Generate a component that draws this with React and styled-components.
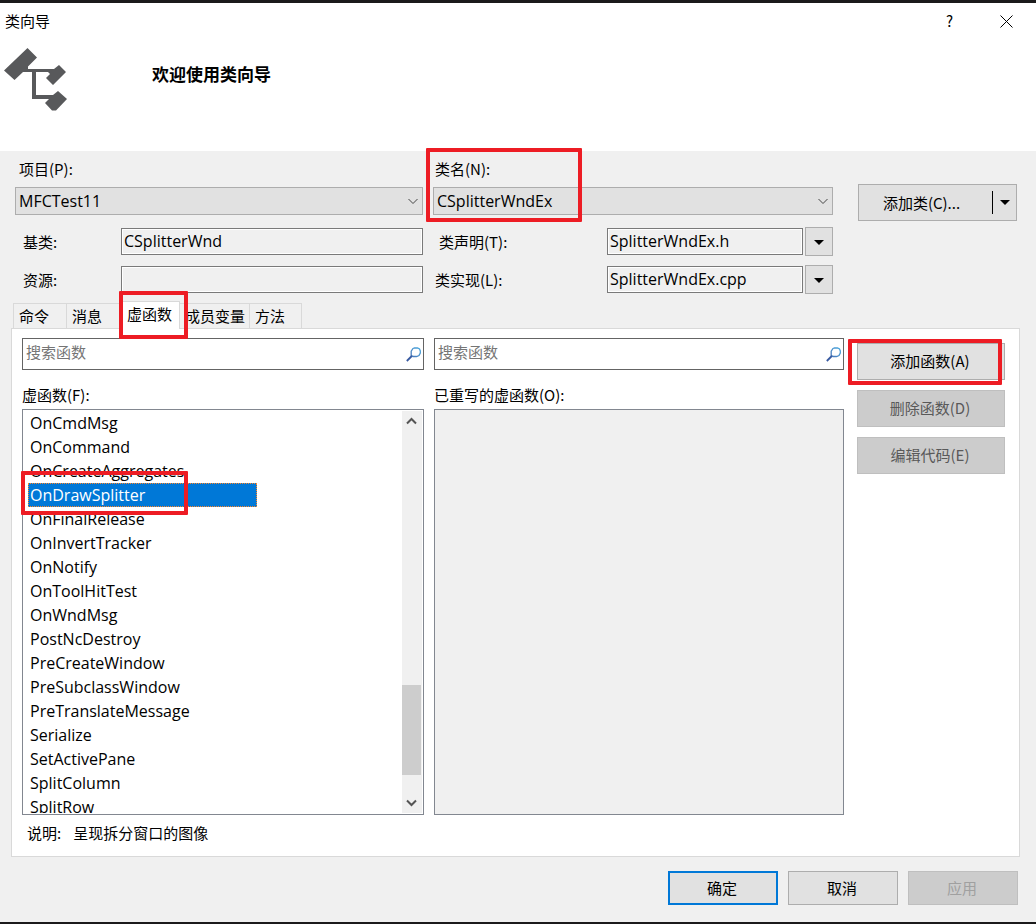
import React, { useState } from 'react';
import styled, { createGlobalStyle, css } from 'styled-components';

const uiFont = `'Noto Sans CJK SC', 'Noto Sans', sans-serif`;
const codeFont = `'Open Sans', 'Noto Sans CJK SC', sans-serif`;

const GlobalStyle = createGlobalStyle`
  * {
    box-sizing: border-box;
  }
  body {
    margin: 0;
    background: #f0f0f0;
    color: #000;
    font: 15px/20px ${uiFont};
  }
  button, input, select {
    margin: 0;
    color: inherit;
    font: inherit;
  }
`;

const Window = styled.div`
  min-height: 100vh;
  display: flex;
  flex-direction: column;
  border-top: 3px solid #1b1a1b;
  border-bottom: 2px solid #1b1a1b;
  background: #f0f0f0;
`;

const Header = styled.header`
  height: 148px;
  background: #fff;
`;

const TitleBar = styled.div`
  height: 36px;
  padding-left: 5px;
  display: flex;
  align-items: center;
  justify-content: space-between;
`;

const WindowButtons = styled.div`
  display: flex;
  height: 100%;
  padding-right: 1px;
`;

const WindowButton = styled.button`
  width: 57px;
  padding: 0;
  border: none;
  background: transparent;
  display: flex;
  align-items: center;
  justify-content: center;
`;

const Banner = styled.div`
  display: flex;
  align-items: flex-start;
  gap: 84px;
  padding: 8px 4px;
`;

const Heading = styled.h1`
  margin: 0;
  padding-top: 15px;
  font-size: 17px;
  line-height: 24px;
  font-weight: 700;
`;

const ClassSection = styled.section`
  display: grid;
  grid-template-columns: minmax(0, 408fr) minmax(0, 400fr) 174px;
  column-gap: 10px;
  padding: 8px 19px 0 15px;
`;

const Column = styled.div`
  position: relative;
  display: flex;
  flex-direction: column;
`;

const Label = styled.label`
  display: block;
  padding-left: ${({ $indent }) => $indent || 0}px;
`;

const ComboBox = styled.div`
  position: relative;
  margin: 8px 0 12px;

  svg {
    position: absolute;
    top: 11px;
    right: 5px;
    pointer-events: none;
  }
`;

const Select = styled.select`
  appearance: none;
  display: block;
  width: 100%;
  height: 28px;
  padding: 0 24px 1px 3px;
  border: 1px solid #adadad;
  border-radius: 0;
  background: #e1e1e1;
  font-family: ${codeFont};
  font-size: 16px;
`;

const FieldRow = styled.div`
  height: 29px;
  display: flex;
  align-items: center;

  & + & {
    margin-top: 9px;
  }
`;

const FieldLabel = styled.label`
  flex: none;
  width: ${({ $width }) => $width}px;
  padding-left: ${({ $indent }) => $indent}px;
`;

const TextField = styled.input`
  flex: 1;
  min-width: 0;
  height: 27px;
  padding: 0 2px 2px;
  border: 1px solid #7a7a7a;
  box-shadow: inset 0 0 0 1px #fff;
  background: #f0f0f0;
  font-family: ${codeFont};
  font-size: 16px;
`;

const Button = styled.button`
  height: 37px;
  padding: 0 2px 2px 0;
  border: 1px solid #adadad;
  background: #e1e1e1;
  display: flex;
  align-items: center;
  justify-content: center;

  &:disabled {
    border-color: #bfbfbf;
    background: #ccc;
    color: #595959;
  }
`;

const ArrowButton = styled(Button)`
  width: 28px;
  height: 29px;
  margin-left: 2px;
  padding: 2px 0 0;
`;

const SplitButton = styled.div`
  height: 37px;
  margin: 25px 0 0 15px;
  display: flex;
  align-items: center;
  border: 1px solid #adadad;
  background: #e1e1e1;
`;

const SplitMain = styled(Button)`
  flex: 1;
  height: 35px;
  padding: 0 8px 0 0;
  border: none;
`;

const SplitArrow = styled(Button)`
  width: 24px;
  height: 23px;
  padding: 0;
  border: none;
  border-left: 1px solid #000;
`;

const Tabs = styled.div`
  display: flex;
  align-items: flex-end;
  height: 28px;
  margin: 7px 0 -1px;
  padding-left: 13px;
`;

const Tab = styled.button`
  position: relative;
  width: ${({ $width }) => $width}px;
  height: 26px;
  padding: 0 0 0 5px;
  border: 1px solid #d9d9d9;
  border-left-width: 0;
  background: #f0f0f0;
  text-align: left;
  white-space: nowrap;

  &:first-child {
    border-left-width: 1px;
  }

  ${({ $active }) =>
    $active &&
    css`
      z-index: 1;
      height: 28px;
      padding: 0 0 4px 7px;
      border-bottom: none;
      background: #fff;
    `}
`;

const Panel = styled.section`
  flex: 1;
  margin: 0 16px 0 11px;
  padding: 9px 14px 12px 10px;
  border: 1px solid #d9d9d9;
  background: #fff;
`;

const PanelGrid = styled.div`
  display: grid;
  grid-template-columns: minmax(0, 402fr) minmax(0, 410fr) 151px;
  column-gap: 10px;
`;

const SearchBox = styled.div`
  height: 32px;
  margin-bottom: 15px;
  padding: 0 2px 0 3px;
  display: flex;
  align-items: center;
  border: 1px solid #646464;
`;

const SearchInput = styled.input`
  flex: 1;
  min-width: 0;
  height: 26px;
  padding: 0 0 5px;
  border: none;
  outline: none;
  background: transparent;

  &::placeholder {
    color: #757575;
    opacity: 1;
  }
`;

const ListFrame = styled.div`
  position: relative;
  height: 406px;
  margin-top: 4px;
  padding: 1px;
  display: flex;
  border: 1px solid #828790;
  background: ${({ $empty }) => ($empty ? '#f0f0f0' : '#fff')};
`;

const List = styled.ul`
  flex: 1;
  height: 402px;
  margin: 0;
  padding: 0 0 0 4px;
  overflow: hidden;
  list-style: none;
  font-family: ${codeFont};
  font-size: 16px;
`;

const ListItem = styled.li`
  width: 229px;
  height: 24px;
  padding-left: 2px;
  line-height: 24px;
  cursor: default;

  ${({ $selected }) =>
    $selected &&
    css`
      background: #0078d7;
      color: #fff;
      outline: 1px dotted #ff8728;
      outline-offset: -1px;
    `}
`;

const ScrollBar = styled.div`
  flex: none;
  width: 20px;
  display: flex;
  flex-direction: column;
  background: #f0f0f0;
`;

const ScrollButton = styled.button`
  height: 20px;
  padding: 0 1px 0 0;
  border: none;
  background: transparent;
  display: flex;
  align-items: center;
  justify-content: center;
`;

const Track = styled.div`
  flex: 1;
  display: flex;
  flex-direction: column;
  justify-content: flex-end;
  padding: 0 1px 18px 0;
`;

const Thumb = styled.div`
  height: 90px;
  background: #cdcdcd;
`;

const Actions = styled.div`
  position: relative;
  display: flex;
  flex-direction: column;
  gap: 10px;
  padding: 5px 0 0 3px;
`;

const Description = styled.p`
  display: flex;
  gap: 12px;
  margin: 8px 0 0;
  padding-left: 5px;
`;

const Footer = styled.footer`
  display: flex;
  justify-content: flex-end;
  gap: 10px;
  padding: 14px 18px 17px;
`;

const FooterButton = styled(Button)`
  width: 110px;
  height: 34px;
  padding: 0 2px 0 0;

  ${({ $primary }) => $primary && css`border: 2px solid #0078d7;`}

  &:disabled {
    color: #a0a0a0;
  }
`;

// Red frame drawn over the part the reader should look at
const Highlight = styled.span`
  position: absolute;
  z-index: 2;
  top: ${({ $top }) => $top}px;
  left: ${({ $left }) => $left}px;
  width: ${({ $width }) => $width}px;
  height: ${({ $height }) => $height}px;
  border: 4px solid #ed1c24;
  border-radius: 1px;
  pointer-events: none;
`;

const ClassIcon = () => (
  <svg width="64" height="64" viewBox="0 0 64 64" fill="#58595b" aria-hidden="true">
    <path d="M23.5 1 33 10.5 24 19.5V22H50L55 18 62 25 49 38 42 31 46 27 44 25H32V48H49L54 44 63 52 52 63.5H48L41 56 45 52H28V25H19L10.5 33 0 23.5Z" />
  </svg>
);

const CloseIcon = () => (
  <svg width="13" height="13" viewBox="0 0 13 13" stroke="#000" fill="none">
    <path d="M.5.5l12 12M12.5.5l-12 12" />
  </svg>
);

const ComboArrow = () => (
  <svg width="10" height="7" viewBox="0 0 10 7" stroke="#444" fill="none">
    <path d="M.5 1 5 5.5 9.5 1" />
  </svg>
);

const DownTriangle = () => (
  <svg width="10" height="5" viewBox="0 0 10 5">
    <path d="M0 0h10L5 5z" />
  </svg>
);

const ScrollArrow = ({ up }) => (
  <svg width="11" height="8" viewBox="0 0 11 8" stroke="#555" strokeWidth="2" fill="none">
    <path d={up ? 'M1 6.5 5.5 2 10 6.5' : 'M1 1.5 5.5 6 10 1.5'} />
  </svg>
);

const SearchIcon = () => (
  <svg width="15" height="15" viewBox="0 0 15 15" fill="none" aria-hidden="true">
    <defs>
      <linearGradient id="lens" x1="1" y1="0" x2="0" y2="1">
        <stop offset="0" stopColor="#4aa9df" />
        <stop offset="1" stopColor="#4a77b8" />
      </linearGradient>
    </defs>
    <path
      d="M7 1.5 8.5 1h3L13.5 2 14.3 4V6L13 8.5 10.5 9.5H7L5.2 8.3V4.2Z"
      stroke="url(#lens)"
      strokeWidth="1.3"
    />
    <path d="M5.8 9 .8 14" stroke="#3759a0" strokeWidth="1.8" />
  </svg>
);

const tabs = [
  { name: '命令', width: 54 },
  { name: '消息', width: 53 },
  { name: '虚函数', width: 60 },
  { name: '成员变量', width: 70 },
  { name: '方法', width: 52 },
];

const functions = [
  'OnCmdMsg',
  'OnCommand',
  'OnCreateAggregates',
  'OnDrawSplitter',
  'OnFinalRelease',
  'OnInvertTracker',
  'OnNotify',
  'OnToolHitTest',
  'OnWndMsg',
  'PostNcDestroy',
  'PreCreateWindow',
  'PreSubclassWindow',
  'PreTranslateMessage',
  'Serialize',
  'SetActivePane',
  'SplitColumn',
  'SplitRow',
];

const Search = ({ label }) => (
  <SearchBox>
    <SearchInput type="text" placeholder="搜索函数" aria-label={label} />
    <SearchIcon />
  </SearchBox>
);

const App = () => {
  const [activeTab, setActiveTab] = useState('虚函数');
  const [selected, setSelected] = useState('OnDrawSplitter');

  return (
    <Window>
      <GlobalStyle />
      <Header>
        <TitleBar>
          <span>类向导</span>
          <WindowButtons>
            <WindowButton aria-label="帮助">?</WindowButton>
            <WindowButton aria-label="关闭"><CloseIcon /></WindowButton>
          </WindowButtons>
        </TitleBar>
        <Banner>
          <ClassIcon />
          <Heading>欢迎使用类向导</Heading>
        </Banner>
      </Header>

      <ClassSection>
        <Column>
          <Label htmlFor="project" $indent={4}>项目(P):</Label>
          <ComboBox>
            <Select id="project"><option>MFCTest11</option></Select>
            <ComboArrow />
          </ComboBox>
          <FieldRow>
            <FieldLabel htmlFor="base" $width={106} $indent={8}>基类:</FieldLabel>
            <TextField id="base" readOnly value="CSplitterWnd" />
          </FieldRow>
          <FieldRow>
            <FieldLabel htmlFor="resource" $width={106} $indent={8}>资源:</FieldLabel>
            <TextField id="resource" readOnly value="" />
          </FieldRow>
        </Column>
        <Column>
          <Label htmlFor="className" $indent={2}>类名(N):</Label>
          <ComboBox>
            <Select id="className"><option>CSplitterWndEx</option></Select>
            <ComboArrow />
          </ComboBox>
          <FieldRow>
            <FieldLabel htmlFor="declaration" $width={174} $indent={6}>类声明(T):</FieldLabel>
            <TextField id="declaration" readOnly value="SplitterWndEx.h" />
            <ArrowButton aria-label="类声明"><DownTriangle /></ArrowButton>
          </FieldRow>
          <FieldRow>
            <FieldLabel htmlFor="implementation" $width={174} $indent={2}>类实现(L):</FieldLabel>
            <TextField id="implementation" readOnly value="SplitterWndEx.cpp" />
            <ArrowButton aria-label="类实现"><DownTriangle /></ArrowButton>
          </FieldRow>
          <Highlight $top={-11} $left={-7} $width={156} $height={74} />
        </Column>
        <SplitButton>
          <SplitMain>添加类(C)...</SplitMain>
          <SplitArrow aria-label="更多"><DownTriangle /></SplitArrow>
        </SplitButton>
      </ClassSection>

      <Tabs role="tablist">
        {tabs.map(({ name, width }) => (
          <Tab
            key={name}
            role="tab"
            aria-selected={name === activeTab}
            $active={name === activeTab}
            $width={width}
            onClick={() => setActiveTab(name)}
          >
            {name}
            {name === '虚函数' && <Highlight $top={-11} $left={-1} $width={69} $height={48} />}
          </Tab>
        ))}
      </Tabs>

      <Panel role="tabpanel">
        <PanelGrid>
          <Column>
            <Search label="搜索虚函数" />
            <Label as="span" id="virtualLabel">虚函数(F):</Label>
            <ListFrame>
              <List role="listbox" aria-labelledby="virtualLabel">
                {functions.map(name => (
                  <ListItem
                    key={name}
                    role="option"
                    aria-selected={name === selected}
                    $selected={name === selected}
                    onClick={() => setSelected(name)}
                  >
                    {name}
                  </ListItem>
                ))}
              </List>
              <ScrollBar>
                <ScrollButton aria-label="向上"><ScrollArrow up /></ScrollButton>
                <Track><Thumb /></Track>
                <ScrollButton aria-label="向下"><ScrollArrow /></ScrollButton>
              </ScrollBar>
              <Highlight $top={61} $left={-2} $width={167} $height={44} />
            </ListFrame>
          </Column>
          <Column>
            <Search label="搜索已重写的虚函数" />
            <Label as="span" id="overriddenLabel">已重写的虚函数(O):</Label>
            <ListFrame $empty role="listbox" aria-labelledby="overriddenLabel" />
          </Column>
          <Actions>
            <Button>添加函数(A)</Button>
            <Button disabled>删除函数(D)</Button>
            <Button disabled>编辑代码(E)</Button>
            <Highlight $top={1} $left={-6} $width={154} $height={46} />
          </Actions>
        </PanelGrid>
        <Description>
          <span>说明:</span>
          <span>呈现拆分窗口的图像</span>
        </Description>
      </Panel>

      <Footer>
        <FooterButton $primary>确定</FooterButton>
        <FooterButton>取消</FooterButton>
        <FooterButton disabled>应用</FooterButton>
      </Footer>
    </Window>
  );
};

export default App;
